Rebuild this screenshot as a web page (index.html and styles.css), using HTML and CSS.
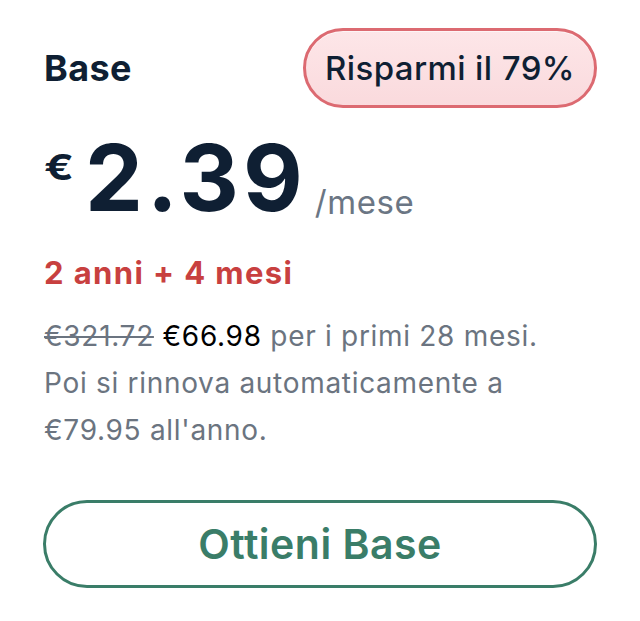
FILE: index.html
```html
<!DOCTYPE html>
<html lang="it">
<head>
<meta charset="utf-8">
<link rel="stylesheet" href="styles.css">
</head>
<body>
<div class="card">
  <div class="head">
    <div class="plan">Base</div>
    <div class="badge">Risparmi il 79%</div>
  </div>
  <div class="price">
    <span class="cur">€</span>
    <span class="amount">2.39</span>
    <span class="per">/mese</span>
  </div>
  <div class="term">2 anni + 4 mesi</div>
  <p class="desc"><s class="old">€321.72</s> <span class="new">€66.98</span> per i primi 28 mesi.<br>Poi si rinnova automaticamente a<br>€79.95 all'anno.</p>
  <button class="cta">Ottieni Base</button>
</div>
</body>
</html>
```
FILE: styles.css
```css
html, body { margin: 0; padding: 0; background: #ffffff; }
body { font-family: Inter, "Noto Sans", sans-serif; color: #0f1f33; }
.card { width: 554px; padding: 28px 0 0 43px; }
.head { display: flex; justify-content: space-between; align-items: center; height: 80px; }
.plan { font-size: 36px; font-weight: 700; color: #0f1f33; padding-left: 1px; letter-spacing: 0.4px; }
.badge {
  box-sizing: border-box; height: 80px; width: 294px;
  display: flex; align-items: center; justify-content: center;
  border-radius: 40px;
  background: linear-gradient(#fde6e8, #fadadd);
  border: 3px solid #dc6a71;
  box-shadow: inset 0 1px 0 rgba(255,255,255,0.6);
  font-size: 33px; font-weight: 500; color: #0f1f33; letter-spacing: 0.4px;
}
.price { display: flex; align-items: flex-start; margin-top: 16px; height: 108px; padding-left: 1px; }
.cur { font-size: 35px; font-weight: 700; margin-top: 22px; margin-right: 17px; display: inline-block; transform: scaleX(1.25); transform-origin: left center; }
.amount { font-size: 92px; font-weight: 700; line-height: 108px; letter-spacing: 4px; }
.per { font-size: 33px; color: #6b7684; align-self: flex-end; margin-left: 8px; margin-bottom: 10px; letter-spacing: 0.6px; }
.term { font-size: 31px; font-weight: 700; color: #c8403f; margin-top: 22px; padding-left: 1px; letter-spacing: 1.4px; }
.desc { font-size: 28px; line-height: 47px; color: #6b7480; margin: 22px 0 0 1px; letter-spacing: 0.7px; white-space: nowrap; }
.old { color: #6b7480; }
.new { color: #000000; }
.cta {
  display: block; box-sizing: border-box; width: 554px; height: 88px; margin-top: 46px;
  background: #ffffff; border: 3px solid #3a7d68; border-radius: 44px;
  font-family: Inter, "Noto Sans", sans-serif; font-size: 41px; font-weight: 600; color: #3a7d68; letter-spacing: 0.5px;
}
```
